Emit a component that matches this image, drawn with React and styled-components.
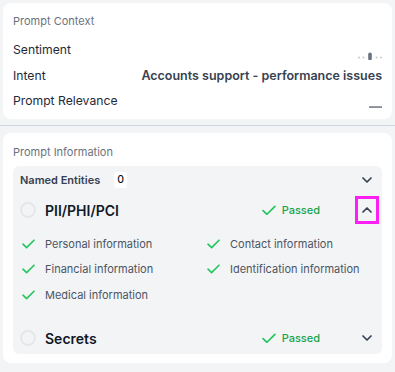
import React from 'react'
import styled, { createGlobalStyle } from 'styled-components'

const GlobalStyle = createGlobalStyle`
  html, body {
    margin: 0;
    padding: 0;
    background: #f3f4f6;
    font-family: Inter, "Liberation Sans", sans-serif;
    -webkit-font-smoothing: antialiased;
  }
`

const Page = styled.div`
  width: 395px;
  padding: 3px 3px 0;
  box-sizing: border-box;
`

const Card = styled.section`
  background: #fff;
  border-radius: 8px;
  padding: ${({ $top }) => $top}px 10px ${({ $bottom }) => $bottom}px;
`

const CardTitle = styled.div`
  font-size: 11px;
  line-height: 16px;
  color: #6b7280;
`

const Rows = styled.div`
  margin-top: 8px;
`

const Row = styled.div`
  display: flex;
  justify-content: space-between;
  align-items: center;
  height: 25.5px;
`

const Label = styled.span`
  font-size: 12.2px;
  color: #1f2937;
`

const Value = styled.span`
  font-size: 12.5px;
  font-weight: 600;
  color: #374151;
`

const Divider = styled.hr`
  border: 0;
  height: 1px;
  background: #cfd8e3;
  margin: 6px -3px 7px;
`

const Panel = styled.div`
  margin-top: 6px;
  background: #f3f4f6;
  border-radius: 6px;
`

const PanelHead = styled.div`
  display: flex;
  align-items: center;
  height: 28px;
  padding: 0 3px 0 7px;
`

const HeadLabel = styled.span`
  font-size: 11px;
  font-weight: 600;
  color: #374151;
`

const Badge = styled.span`
  margin-left: 14px;
  background: #fff;
  border-radius: 3px;
  min-width: 13px;
  height: 16px;
  line-height: 16px;
  text-align: center;
  font-size: 10.5px;
  font-weight: 500;
  color: #111827;
`

const Spacer = styled.div`
  flex: 1;
`

const GroupRow = styled.div`
  display: flex;
  align-items: center;
  height: 32px;
  padding: 0 3px 0 7px;
`

const Radio = styled.span`
  width: 16px;
  height: 16px;
  box-sizing: border-box;
  border: 2px solid #e5e7eb;
  border-radius: 50%;
`

const GroupName = styled.span`
  margin-left: 9px;
  font-size: 14px;
  font-weight: 600;
  color: #111827;
`

const Passed = styled.span`
  display: flex;
  align-items: center;
  gap: 6px;
  font-size: 11px;
  font-weight: 500;
  color: #16a34a;
  margin-right: 35px;
`

const Toggle = styled.span`
  display: flex;
  align-items: center;
  justify-content: center;
  width: 24px;
  height: 28px;
  box-sizing: border-box;
  border: 3px solid ${({ $focus }) => ($focus ? '#ff1ff5' : 'transparent')};
`

const Checklist = styled.div`
  display: grid;
  grid-template-columns: 185px 1fr;
  grid-auto-rows: 25.5px;
  padding: 5px 0 14.5px 9px;
`

const Item = styled.div`
  display: flex;
  align-items: center;
  gap: 10px;
  font-size: 11px;
  color: #4b5563;
`

const Check = ({ size = 13 }) => (
  <svg width={size} height={size * 0.77} viewBox="0 0 13 10" fill="none">
    <path d="M1 5.2 L4.6 8.6 L12 1.2" stroke="#22c55e" strokeWidth="1.6" strokeLinecap="round" strokeLinejoin="round" />
  </svg>
)

const Chevron = ({ up }) => (
  <svg width="10" height="6" viewBox="0 0 10 6" fill="none">
    <path
      d={up ? 'M1 5 L5 1 L9 5' : 'M1 1 L5 5 L9 1'}
      stroke="#374151"
      strokeWidth="1.7"
      strokeLinecap="round"
      strokeLinejoin="round"
    />
  </svg>
)

const SentimentIcon = () => (
  <svg width="24" height="20" viewBox="0 0 24 20">
    <circle cx="1" cy="17.5" r="1" fill="#c4c9d1" />
    <circle cx="5.5" cy="17.5" r="1" fill="#c4c9d1" />
    <rect x="10.2" y="12.5" width="3.6" height="8" rx="1.8" fill="#6b7280" />
    <circle cx="18.5" cy="17.5" r="1" fill="#c4c9d1" />
    <circle cx="23" cy="17.5" r="1" fill="#c4c9d1" />
  </svg>
)

const EmptyDash = () => (
  <svg width="13" height="20" viewBox="0 0 13 20">
    <rect x="0" y="15.3" width="13" height="1.5" fill="#6b7280" />
  </svg>
)

const piiItems = [
  'Personal information',
  'Contact information',
  'Financial information',
  'Identification information',
  'Medical information',
]

const Group = ({ name, focus, open }) => (
  <GroupRow>
    <Radio />
    <GroupName>{name}</GroupName>
    <Spacer />
    <Passed>
      <Check size={14} />
      Passed
    </Passed>
    <Toggle $focus={focus}>
      <Chevron up={open} />
    </Toggle>
  </GroupRow>
)

export default function App() {
  return (
    <Page>
      <GlobalStyle />
      <Card $top={10} $bottom={5.5}>
        <CardTitle>Prompt Context</CardTitle>
        <Rows>
          <Row>
            <Label>Sentiment</Label>
            <SentimentIcon />
          </Row>
          <Row>
            <Label>Intent</Label>
            <Value>Accounts support - performance issues</Value>
          </Row>
          <Row>
            <Label>Prompt Relevance</Label>
            <EmptyDash />
          </Row>
        </Rows>
      </Card>
      <Divider />
      <Card $top={11} $bottom={9}>
        <CardTitle>Prompt Information</CardTitle>
        <Panel>
          <PanelHead>
            <HeadLabel>Named Entities</HeadLabel>
            <Badge>0</Badge>
            <Spacer />
            <Toggle>
              <Chevron />
            </Toggle>
          </PanelHead>
          <Group name="PII/PHI/PCI" focus open />
          <Checklist>
            {piiItems.map((item) => (
              <Item key={item}>
                <Check />
                {item}
              </Item>
            ))}
          </Checklist>
          <Group name="Secrets" />
        </Panel>
      </Card>
    </Page>
  )
}
